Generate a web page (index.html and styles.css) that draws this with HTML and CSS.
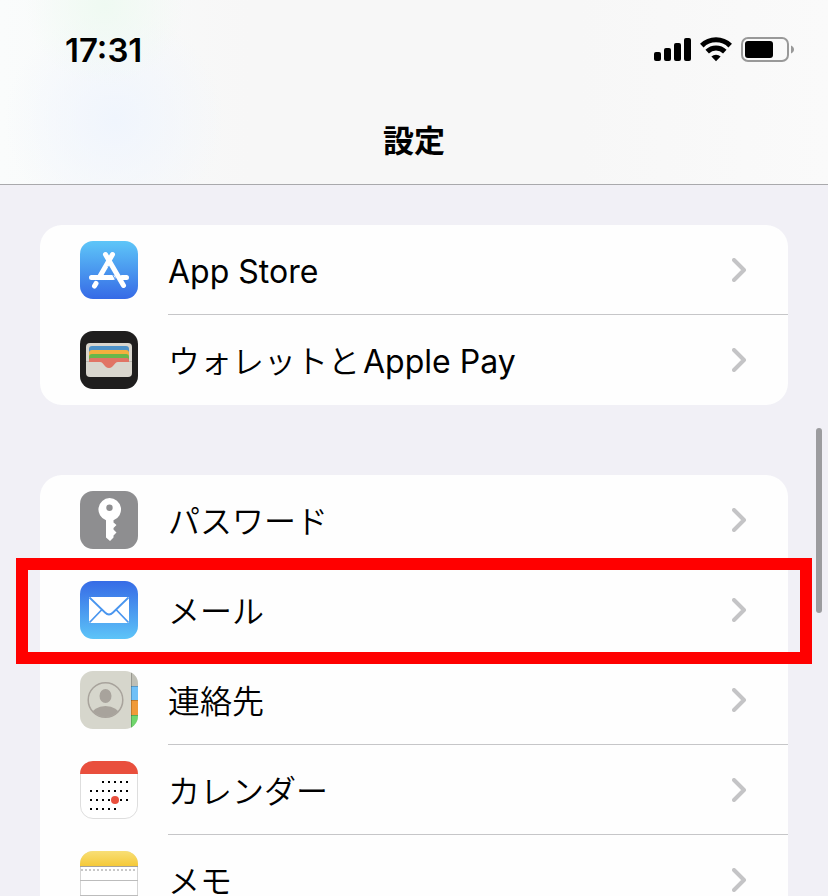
FILE: index.html
```
<!DOCTYPE html>
<html lang="ja">
<head>
    <meta charset="UTF-8">
    <meta name="viewport" content="width=device-width, initial-scale=1.0">
    <title>設定</title>
    <link rel="stylesheet" href="styles.css">
</head>
<body>
    <header class="header">
        <div class="status">
            <span class="time">17:31</span>
            <div class="status-icons">
                <svg width="37" height="26" viewBox="0 0 37 26">
                    <rect x="0" y="15" width="7" height="9" rx="2"/>
                    <rect x="10" y="11" width="7" height="13" rx="2"/>
                    <rect x="20" y="6" width="7" height="18" rx="2"/>
                    <rect x="30" y="1" width="7" height="23" rx="2"/>
                </svg>
                <svg width="32" height="26" viewBox="0 0 32 26" fill="none" stroke="#000" stroke-width="5">
                    <path d="M1.8 8.6a20.2 20.2 0 0 1 28.4 0"/>
                    <path d="M7.2 14.6a12.6 12.6 0 0 1 17.6 0"/>
                    <path d="M11.4 19.6a6.6 6.6 0 0 1 9.2 0L16 24.3z" fill="#000" stroke="none"/>
                </svg>
                <svg width="54" height="26" viewBox="0 0 54 26">
                    <rect x="1" y="1" width="46" height="23" rx="6" fill="none" stroke="#999" stroke-width="2"/>
                    <rect x="4" y="4" width="28" height="17" rx="3"/>
                    <path d="M50 8.5c4 1.6 4 6.4 0 8z" fill="#999"/>
                </svg>
            </div>
        </div>
        <h1>設定</h1>
    </header>

    <main class="content">
        <nav class="group">
            <a class="row" href="#appstore">
                <svg class="icon" viewBox="0 0 58 58">
                    <defs>
                        <linearGradient id="store" x2="0" y2="1">
                            <stop offset="0" stop-color="#5ec6f8"/>
                            <stop offset="1" stop-color="#366ae6"/>
                        </linearGradient>
                    </defs>
                    <rect width="58" height="58" rx="13" fill="url(#store)"/>
                    <g fill="none" stroke="#fff" stroke-width="5" stroke-linecap="round">
                        <path d="M32.5 13.5L19.5 36M11.5 36.5H33M42 36.5H46.5M16 42.5L14.5 45"/>
                        <path d="M25.5 13.5L43.5 44.5"/>
                    </g>
                    <path d="M28 25.5L36.5 40.5" stroke="#4790ef"/>
                </svg>
                <span class="label">App Store</span>
                <svg class="chevron" viewBox="0 0 15 24"><path d="M2 2l10 10L2 22"/></svg>
            </a>
            <a class="row" href="#wallet">
                <svg class="icon" viewBox="0 0 58 58">
                    <rect width="58" height="58" rx="13" fill="#1f1e1e"/>
                    <rect x="6" y="12" width="46" height="34" rx="4" fill="#d9d6ce"/>
                    <path d="M9 31V18a3 3 0 0 1 3-3h34a3 3 0 0 1 3 3v13z" fill="#4e92c8"/>
                    <path d="M9 31v-9a3 3 0 0 1 3-3h34a3 3 0 0 1 3 3v9z" fill="#f3b03e"/>
                    <path d="M9 31v-5a3 3 0 0 1 3-3h34a3 3 0 0 1 3 3v5z" fill="#68b74b"/>
                    <path d="M9 31v-2a2 2 0 0 1 2-2h36a2 2 0 0 1 2 2v2H38c-4 0-4 6-9 6s-5-6-9-6z" fill="#e17465"/>
                    <path d="M6 30.5h3M49 30.5h3" stroke="#bbb8b0"/>
                </svg>
                <span class="label">ウォレットと<span class="latin">Apple Pay</span></span>
                <svg class="chevron" viewBox="0 0 15 24"><path d="M2 2l10 10L2 22"/></svg>
            </a>
        </nav>

        <nav class="group">
            <a class="row" href="#passwords">
                <svg class="icon" viewBox="0 0 58 58">
                    <rect width="58" height="58" rx="13" fill="#8e8e90"/>
                    <path d="M29.5 7a11.5 11.5 0 0 1 4 22.3v2.2l3 2.5-3 3v1.5l3 3-3 3v2L30 50l-4-3.5V29.3A11.5 11.5 0 0 1 29.5 7z" fill="#fff"/>
                    <circle cx="29.5" cy="16.7" r="3.2" fill="#8e8e90"/>
                </svg>
                <span class="label">パスワード</span>
                <svg class="chevron" viewBox="0 0 15 24"><path d="M2 2l10 10L2 22"/></svg>
            </a>
            <a class="row selected" href="#mail">
                <svg class="icon" viewBox="0 0 58 58">
                    <defs>
                        <linearGradient id="mail" x2="0" y2="1">
                            <stop offset="0" stop-color="#366be6"/>
                            <stop offset="1" stop-color="#5dc4f8"/>
                        </linearGradient>
                    </defs>
                    <rect width="58" height="58" rx="13" fill="url(#mail)"/>
                    <rect x="9" y="16" width="40" height="26" rx="1" fill="#fff"/>
                    <path d="M9.5 16.5l15.5 15q4 4 8 0l15.5-15M9.5 41.5L21.5 29M48.5 41.5L36.5 29" fill="none" stroke="#4a96ef" stroke-width="1.8"/>
                </svg>
                <span class="label">メール</span>
                <svg class="chevron" viewBox="0 0 15 24"><path d="M2 2l10 10L2 22"/></svg>
            </a>
            <a class="row" href="#contacts">
                <svg class="icon" viewBox="0 0 58 58">
                    <defs>
                        <clipPath id="round"><rect width="58" height="58" rx="13"/></clipPath>
                        <clipPath id="face"><circle cx="25.5" cy="29" r="17"/></clipPath>
                    </defs>
                    <g clip-path="url(#round)">
                        <rect width="58" height="58" fill="#d6d6cc"/>
                        <rect x="51" width="7" height="15" fill="#bfbfb5"/>
                        <rect x="51" y="15" width="7" height="14" fill="#70c0f7"/>
                        <rect x="51" y="29" width="7" height="15" fill="#f09a38"/>
                        <rect x="51" y="44" width="7" height="14" fill="#70d66c"/>
                        <path d="M51.5 0V58M51 15.5h7M51 29.5h7M51 44.5h7" stroke="#000" stroke-opacity=".2"/>
                    </g>
                    <g clip-path="url(#face)" fill="#a8a39c">
                        <ellipse cx="25.5" cy="25" rx="6" ry="7"/>
                        <ellipse cx="25.5" cy="44" rx="14" ry="9"/>
                    </g>
                    <circle cx="25.5" cy="29" r="17.3" fill="none" stroke="#a8a39c" stroke-width="1.5"/>
                </svg>
                <span class="label">連絡先</span>
                <svg class="chevron" viewBox="0 0 15 24"><path d="M2 2l10 10L2 22"/></svg>
            </a>
            <a class="row" href="#calendar">
                <svg class="icon" viewBox="0 0 58 58">
                    <rect x=".5" y=".5" width="57" height="57" rx="12.5" fill="#fff" stroke="#dedede"/>
                    <path d="M0 13A13 13 0 0 1 13 0h32a13 13 0 0 1 13 13z" fill="#e94f3d"/>
                    <!-- day dots, 6px apart -->
                    <g stroke="#000" stroke-width="2" stroke-dasharray="2 4">
                        <path d="M22 21h26M10 30h38M10 39h38M10 48h26"/>
                    </g>
                    <circle cx="35" cy="39" r="4" fill="#e94f3d"/>
                </svg>
                <span class="label">カレンダー</span>
                <svg class="chevron" viewBox="0 0 15 24"><path d="M2 2l10 10L2 22"/></svg>
            </a>
            <a class="row" href="#notes">
                <svg class="icon" viewBox="0 0 58 58">
                    <defs>
                        <linearGradient id="notes" x2="0" y2="1">
                            <stop offset="0" stop-color="#f8df76"/>
                            <stop offset="1" stop-color="#f5c939"/>
                        </linearGradient>
                    </defs>
                    <rect x=".5" y=".5" width="57" height="57" rx="12.5" fill="#fff" stroke="#d5d5d5"/>
                    <path d="M0 15v-2A13 13 0 0 1 13 0h32a13 13 0 0 1 13 13v2z" fill="url(#notes)"/>
                    <path d="M0 15.5h58" stroke="#a5a29b"/>
                    <path d="M1 19h56" stroke="#c8c8c8" stroke-width="2" stroke-dasharray="2 2"/>
                    <path d="M0 29.5h58M0 44.5h58" stroke="#bcbcbc"/>
                </svg>
                <span class="label">メモ</span>
                <svg class="chevron" viewBox="0 0 15 24"><path d="M2 2l10 10L2 22"/></svg>
            </a>
        </nav>
    </main>
    <div class="scrollbar"></div>
</body>
</html>
```
FILE: styles.css
```
* {
    margin: 0;
    padding: 0;
    box-sizing: border-box;
}
body {
    height: 100vh;
    display: flex;
    flex-direction: column;
    overflow: hidden;
    background-color: #f1f0f6;
    color: #000;
    font-family: Inter, "Noto Sans CJK JP", sans-serif;
    font-size: 32px;
}

/* header */
.header {
    flex-shrink: 0;
    border-bottom: 1px solid #a9a9ac;
    background:
        radial-gradient(circle at 105px 5px, #effaf2, rgba(239, 250, 242, 0) 80px),
        radial-gradient(circle at 115px 120px, #f0f5fd, rgba(240, 245, 253, 0) 110px),
        linear-gradient(to right, #fafcfc, #f7f7f7 30%, #f7f7f7 70%, #fafafa);
}
.status {
    height: 100px;
    padding: 0 33px 0 65px;
    display: flex;
    align-items: center;
    justify-content: space-between;
}
.time {
    font-size: 33px;
    font-weight: 600;
}
.status-icons {
    display: flex;
    gap: 9px;
}
.header h1 {
    height: 84px;
    line-height: 82px;
    text-align: center;
    font-size: 31px;
    font-weight: 700;
}

/* list */
.content {
    flex: 1;
    min-height: 0;
    padding: 40px 40px 0;
    display: flex;
    flex-direction: column;
    gap: 70px;
}
.group {
    flex-shrink: 0;
    background-color: #fefefe;
    border-radius: 22px;
}
.row {
    position: relative;
    height: 90px;
    padding: 0 41px 0 40px;
    display: flex;
    align-items: center;
    color: inherit;
    text-decoration: none;
}
.row:not(:last-child)::before {
    content: '';
    position: absolute;
    left: 128px;
    right: 0;
    bottom: 0;
    height: 1px;
    background-color: #c6c6c8;
}
.icon {
    width: 58px;
    height: 58px;
    margin-right: 30px;
}
.label {
    flex: 1;
    padding-top: 4px;
    line-height: 32px;
    font-family: Inter, "Noto Sans CJK JP DemiLight", "Noto Sans CJK JP", sans-serif;
}
.latin {
    margin-left: 3px;
}
.chevron {
    width: 15px;
    height: 24px;
    fill: none;
    stroke: #c4c4c6;
    stroke-width: 4;
    stroke-linecap: round;
    stroke-linejoin: round;
}

/* red frame round the row */
.selected::after {
    content: '';
    position: absolute;
    top: -7px;
    right: -24px;
    bottom: -9px;
    left: -24px;
    border: 12px solid #f00;
    z-index: 1;
}

.scrollbar {
    position: fixed;
    top: 428px;
    right: 6px;
    width: 6px;
    height: 185px;
    border-radius: 3px;
    background-color: #9c9c9f;
}
```
